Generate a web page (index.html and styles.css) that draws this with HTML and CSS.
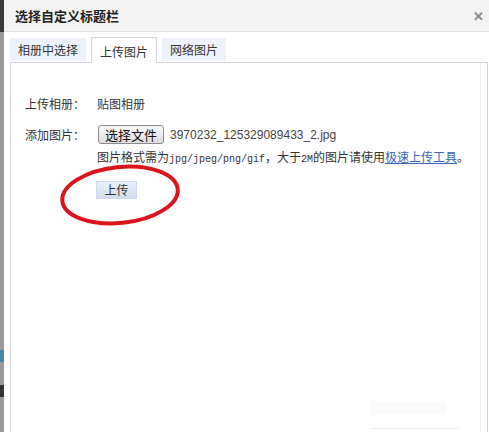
FILE: index.html
```html
<!DOCTYPE html>
<html lang="zh-CN">
<head>
    <meta charset="UTF-8">
    <title>选择自定义标题栏</title>
    <link rel="stylesheet" href="styles.css">
</head>
<body>

    <!-- Fondo detrás del diálogo -->
    <div class="backdrop">
        <div class="backdrop-top"></div>
        <div class="backdrop-mark mark-blue"></div>
        <div class="backdrop-mark mark-dark"></div>
    </div>

    <!-- Diálogo -->
    <div class="dialog">
        <div class="dialog-title">
            <span>选择自定义标题栏</span>
            <span class="close">&#x2715;</span>
        </div>

        <div class="dialog-body">
            <div class="tabs">
                <div class="tab">相册中选择</div>
                <div class="tab active">上传图片</div>
                <div class="tab">网络图片</div>
            </div>

            <div class="panel">
                <div class="form">
                    <div class="row">
                        <span class="label">上传相册：</span>
                        <span class="value">贴图相册</span>
                    </div>
                    <div class="row">
                        <span class="label">添加图片：</span>
                        <span class="file-btn">选择文件</span>
                        <span class="file-name">3970232_125329089433_2.jpg</span>
                    </div>
                    <div class="hint">
                        图片格式需为<span class="mono">jpg/jpeg/png/gif</span>，大于<span class="mono">2M</span>的图片请使用<a href="#">极速上传工具</a>。
                    </div>
                    <div class="upload-row">
                        <span class="upload-btn">上传</span>
                    </div>
                </div>

                <!-- restos tenues abajo a la derecha -->
                <div class="faint-box"></div>
                <div class="faint-line"></div>
            </div>
        </div>

        <!-- Marca roja -->
        <svg class="red-ring" width="130" height="70" viewBox="0 0 130 70">
            <ellipse cx="64" cy="34" rx="58" ry="28" fill="none" stroke="#d9141c" stroke-width="4" transform="rotate(-6 64 34)"/>
        </svg>
    </div>

</body>
</html>
```

FILE: styles.css
```css
/* Estilos generales */
html, body {
    margin: 0;
    padding: 0;
}

body {
    width: 489px;
    height: 432px;
    overflow: hidden;
    display: flex;
    font-family: "Noto Sans CJK SC", "Liberation Sans", sans-serif;
    font-size: 12px;
    color: #333;
    background-color: #fff;
}

/* Fondo a la izquierda */
.backdrop {
    width: 4px;
    flex-shrink: 0;
    background-color: #9a9a9a;
    position: relative;
}

.backdrop-top {
    height: 32px;
    background-color: #3a3a3a;
}

.backdrop-mark {
    position: absolute;
    left: 0;
    width: 4px;
    height: 12px;
}

.mark-blue {
    top: 350px;
    background-color: #4a86a8;
}

.mark-dark {
    top: 385px;
    background-color: #333;
}

/* Diálogo */
.dialog {
    flex: 1;
    display: flex;
    flex-direction: column;
    position: relative;
    background-color: #fff;
}

.dialog-title {
    height: 31px;
    display: flex;
    align-items: center;
    justify-content: space-between;
    padding: 0 5px 0 11px;
    background-color: #f3f3f3;
    border-bottom: 1px solid #e2e2e2;
    font-size: 13px;
    font-weight: bold;
    color: #222;
}

.close {
    font-size: 13px;
    color: #888;
    font-weight: bold;
}

.dialog-body {
    flex: 1;
    display: flex;
    flex-direction: column;
    padding: 5px 0 0 6px;
}

/* Pestañas */
.tabs {
    display: flex;
    align-items: flex-end;
    gap: 5px;
    height: 25px;
}

.tab {
    height: 23px;
    line-height: 23px;
    padding: 0 8px;
    margin-bottom: 1px;
    background-color: #eef2fa;
    font-size: 12px;
    color: #333;
}

.tab.active {
    height: 25px;
    line-height: 27px;
    margin-bottom: -1px;
    background-color: #fff;
    border: 1px solid #d4d4d4;
    border-bottom: none;
    position: relative;
    z-index: 1;
}

/* Panel */
.panel {
    flex: 1;
    position: relative;
    border: 1px solid #d4d4d4;
    border-bottom: none;
    margin-right: 1px;
}

.panel::after {
    content: "";
    position: absolute;
    top: 0;
    bottom: 0;
    right: 6px;
    border-right: 1px solid #f0f0f0;
}

.form {
    padding: 31px 0 0 14px;
}

.row {
    display: flex;
    align-items: center;
    height: 19px;
    margin-bottom: 12px;
}

.label {
    width: 72px;
}

.file-btn {
    height: 17px;
    line-height: 17px;
    padding: 0 6px;
    margin-left: 1px;
    border: 1px solid #8c8c8c;
    border-radius: 3px;
    background: linear-gradient(#fafafa, #dcdcdc);
    font-size: 13px;
    color: #111;
}

.file-name {
    margin-left: 6px;
    font-family: "Liberation Sans", sans-serif;
    font-size: 12px;
    color: #444;
}

.hint {
    margin: -6px 0 0 72px;
    line-height: 14px;
    white-space: nowrap;
}

.mono {
    font-family: "Liberation Mono", monospace;
    font-size: 10px;
}

.hint a {
    color: #3a62b8;
    text-decoration: underline;
}

.upload-row {
    margin: 14px 0 0 71px;
}

.upload-btn {
    display: inline-block;
    width: 39px;
    height: 16px;
    line-height: 16px;
    text-align: center;
    border: 1px solid #cfdbea;
    background: linear-gradient(#eaf1fa, #cfdcee);
    color: #333;
}

/* Restos tenues */
.faint-box {
    position: absolute;
    left: 360px;
    top: 338px;
    width: 76px;
    height: 14px;
    background-color: #fafafa;
}

.faint-line {
    position: absolute;
    left: 360px;
    top: 365px;
    width: 88px;
    height: 1px;
    background-color: #f0f0f0;
}

/* Marca roja */
.red-ring {
    position: absolute;
    left: 52px;
    top: 161px;
}
```
